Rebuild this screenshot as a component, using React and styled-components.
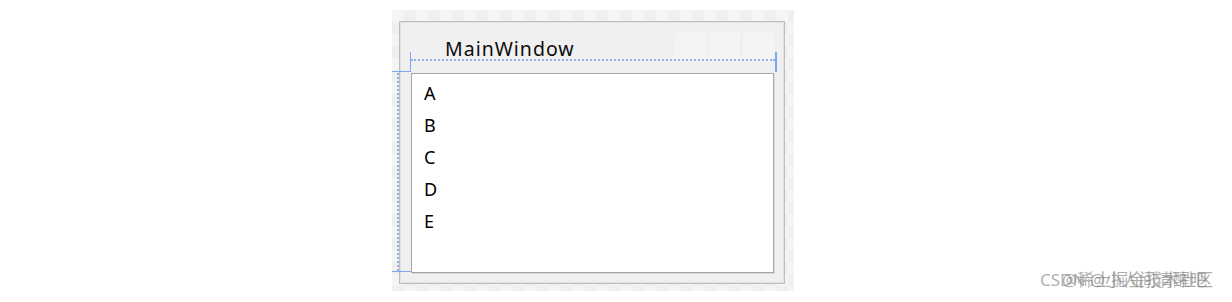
import React from "react";
import styled, { createGlobalStyle } from "styled-components";

const Global = createGlobalStyle`
  html, body { margin: 0; padding: 0; background: #ffffff; }
  body { font-family: "Noto Sans", "Noto Sans CJK SC", sans-serif; }
`;

const Page = styled.div`
  position: relative;
  width: 1232px;
  height: 302px;
  padding: 10px 0 0 392px;
  box-sizing: border-box;
`;

const Canvas = styled.div`
  position: relative;
  width: 402px;
  height: 281px;
  padding: 11px 0 0 7px;
  box-sizing: border-box;
  background: repeating-conic-gradient(#efefef 0 25%, #f5f5f5 0 50%) 0 0 / 24px 24px;
`;

const Frame = styled.div`
  width: 386px;
  height: 263px;
  box-sizing: border-box;
  border: 1px solid #bdbdbd;
  box-shadow: inset 0 0 0 1px #e2e2e2;
  background: #f0f0f0;
  display: flex;
  flex-direction: column;
  padding: 0 10px 10px 11px;
`;

const TitleBar = styled.div`
  height: 51px;
  flex: none;
  display: flex;
  align-items: flex-start;
`;

const Title = styled.div`
  margin: 15px 0 0 34px;
  font-family: "Noto Sans", sans-serif;
  font-size: 19.5px;
  line-height: 24px;
  letter-spacing: 1px;
  color: #0c0c0c;
  flex: 1;
`;

const Buttons = styled.div`
  display: flex;
  gap: 3px;
  margin-top: 11px;
`;

const WinButton = styled.div`
  width: 31px;
  height: 29px;
  background: #f4f4f4;
`;

const ListBox = styled.div`
  flex: 1;
  background: #ffffff;
  border: 1px solid #a6a6a6;
  box-shadow: 1px 1px 0 #dadada;
  padding-top: 3px;
  display: flex;
  flex-direction: column;
`;

const Item = styled.div`
  height: 32px;
  line-height: 32px;
  padding-left: 12px;
  font-family: "Noto Sans", sans-serif;
  font-size: 18px;
  color: #000;
`;

const Mark = styled.div`
  position: absolute;
  left: ${(p) => p.$x}px;
  top: ${(p) => p.$y}px;
  width: ${(p) => p.$w}px;
  height: ${(p) => p.$h}px;
  background: ${(p) => (p.$dotted ? "transparent" : "#7ea6f2")};
  ${(p) =>
    p.$dotted === "h"
      ? "border-top: 2px dotted #8fb2f3; box-sizing: border-box;"
      : p.$dotted === "v"
      ? "border-left: 2px dotted #8fb2f3; box-sizing: border-box;"
      : ""}
`;

const Watermark = styled.div`
  position: absolute;
  left: ${(p) => p.$x}px;
  top: 268px;
  font-family: "Noto Sans", "Noto Sans CJK SC", sans-serif;
  font-size: 17px;
  line-height: 24px;
  color: rgba(120, 120, 120, 0.6);
  white-space: nowrap;
`;

export default function App() {
  const items = ["A", "B", "C", "D", "E"];
  return (
    <>
      <Global />
      <Page>
        <Canvas>
          <Frame>
            <TitleBar>
              <Title>MainWindow</Title>
              <Buttons>
                <WinButton />
                <WinButton />
                <WinButton />
              </Buttons>
            </TitleBar>
            <ListBox>
              {items.map((t) => (
                <Item key={t}>{t}</Item>
              ))}
            </ListBox>
          </Frame>
          <Mark $dotted="h" $x={19} $y={49} $w={364} $h={2} />
          <Mark $x={18} $y={42} $w={1} $h={20} />
          <Mark $x={383} $y={42} $w={2} $h={20} />
          <Mark $x={0} $y={61} $w={19} $h={1} />
          <Mark $dotted="v" $x={5} $y={63} $w={2} $h={198} />
          <Mark $x={0} $y={261} $w={19} $h={1} />
        </Canvas>
        <Watermark $x={1040}>CSDN @小人间清醒吧</Watermark>
        <Watermark $x={1062}>@稀土掘金技术社区</Watermark>
      </Page>
    </>
  );
}
